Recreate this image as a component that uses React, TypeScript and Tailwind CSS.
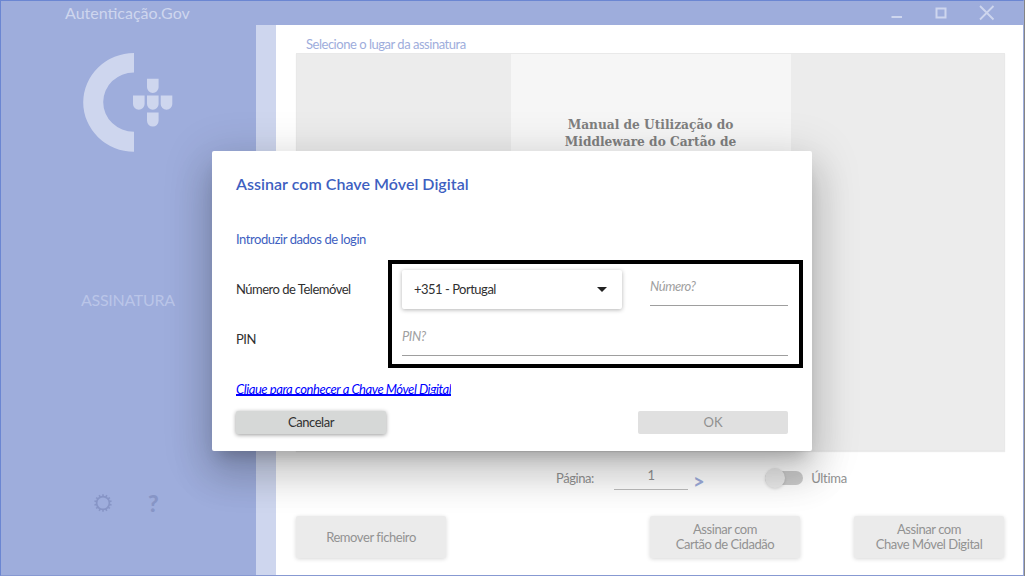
import React from "react";

const shadowButton = "shadow-[0_1px_4px_rgba(0,0,0,0.16)]";

function Logo() {
  const shield = (x: number, y: number) => (
    <path
      key={`${x}-${y}`}
      d={`M${x} ${y}h11.6v8.4a5.8 5.8 0 0 1-11.6 0z`}
    />
  );
  return (
    <svg width="90" height="100" viewBox="0 0 90 100" className="fill-[#ced6ee]">
      <path d="M51 1A51 49.500 0 0 0 0.200 50.200A51 49.500 0 0 0 51 99.700V79.800A30.800 29.700 0 0 1 20.200 50.100A30.800 29.700 0 0 1 51 20.400z" />
      {shield(64, 26.8)}
      {shield(50, 43.6)}
      {shield(64, 43.6)}
      {shield(77.7, 43.6)}
      {shield(64, 60.4)}
    </svg>
  );
}

function Gear() {
  const teeth = Array.from({ length: 14 }, (_, i) => (i * 360) / 14);
  return (
    <svg width="18" height="18" viewBox="-9 -9 18 18" className="stroke-[#8795c6]">
      <circle r="6.400" fill="none" strokeWidth="1.700" />
      {teeth.map((a) => (
        <path key={a} d="M0 -6.500V-8.800" strokeWidth="1.600" transform={`rotate(${a})`} />
      ))}
    </svg>
  );
}

function TitleBar() {
  return (
    <header className="flex h-6 shrink-0 items-center justify-between pl-16 text-[#ced6ee]">
      <span className="text-base leading-6">Autenticação.Gov</span>
      <svg width="133" height="24" viewBox="0 0 133 24" fill="none" className="stroke-[#ced6ee]">
        <path d="M1.500 16H12" strokeWidth="2" />
        <rect x="46.500" y="7.500" width="9" height="9" strokeWidth="2" />
        <path d="M90 5L103.500 18.500M103.500 5L90 18.500" strokeWidth="1.800" />
      </svg>
    </header>
  );
}

function Sidebar() {
  return (
    <aside className="flex w-[255px] shrink-0 flex-col pl-[82px] pt-[27px]">
      <Logo />
      <span className="-ml-0.5 mt-[136px] text-base leading-6 tracking-[-0.3px] text-[#bac5e8]">ASSINATURA</span>
      <div className="mt-[179px] flex items-center gap-[36px] pl-[11px] text-[#8795c6]">
        <Gear />
        <span className="text-[23px] leading-6 font-black">?</span>
      </div>
    </aside>
  );
}

function ActionButton({ children, className }: { children: React.ReactNode; className: string }) {
  return (
    <button
      className={`flex h-[42px] w-[150px] items-center justify-center rounded-[2px] bg-[#ebebeb] text-[13px] leading-[15px] tracking-[-0.43px] text-[#929292] ${shadowButton} ${className}`}
    >
      {children}
    </button>
  );
}

function MainPanel() {
  return (
    <main className="flex grow flex-col bg-white pl-5 text-[13px] tracking-[-0.43px] text-[#929292]">
      <h2 className="h-7 pl-2.5 pt-[11px] text-[13px] leading-4 tracking-[-0.48px] text-[#9eaddc]">
        Selecione o lugar da assinatura
      </h2>
      <section className="flex h-[398px] w-[709px] shrink-0 justify-center border border-[#e9e9e9] bg-[#ececec] shadow-[0_1px_1px_rgba(0,0,0,0.08)]">
        <div className="w-[280px] bg-[#f6f6f6] pt-[63px] text-center font-['DejaVu_Serif',serif] text-[12.200px] leading-[17px] font-bold tracking-normal text-[#7f7f7f]">
          Manual de Utilização do
          <br />
          Middleware do Cartão de
        </div>
      </section>
      <div className="flex h-[65px] shrink-0 pl-[260px] pt-[14px]">
        <span className="mt-[5px] w-[58px] leading-4">Página:</span>
        <div className="h-[25px] w-[74px] border-b border-[#bdbdbd] pt-0.5 text-center leading-4">1</div>
        <span className="ml-[5px] mt-[8px] text-xl leading-[17px] font-bold text-[#9eaddc]">&gt;</span>
        <div className="ml-[61px] mt-1.5 flex h-[14px] w-[38px] items-center rounded-full bg-[#cdcdcd]">
          <span className="size-5 shrink-0 rounded-full bg-[#ebebeb] shadow-[0_1px_3px_rgba(0,0,0,0.15)]" />
        </div>
        <span className="ml-2 mt-[5px] leading-4 tracking-[-0.3px]">Última</span>
      </div>
      <div className="flex">
        <ActionButton className="">Remover ficheiro</ActionButton>
        <ActionButton className="ml-[204px]">
          Assinar com
          <br />
          Cartão de Cidadão
        </ActionButton>
        <ActionButton className="ml-[54px]">
          Assinar com
          <br />
          Chave Móvel Digital
        </ActionButton>
      </div>
    </main>
  );
}

function LoginDialog() {
  return (
    <div
      role="dialog"
      className="absolute left-[212px] top-[151px] flex h-[300px] w-[600px] flex-col rounded-[2px] bg-white pl-6 text-[13px] tracking-[-0.44px] text-[#303030] shadow-[0_11px_15px_-7px_rgba(0,0,0,0.2),0_24px_38px_3px_rgba(0,0,0,0.14),0_9px_46px_8px_rgba(0,0,0,0.12)]"
    >
      <h1 className="mt-[23px] text-base leading-5 font-semibold tracking-[0.03px] text-[#3e5fc1]">
        Assinar com Chave Móvel Digital
      </h1>
      <p className="mt-[37px] leading-4 text-[#3e5fc1]">Introduzir dados de login</p>
      <div className="mt-[13px] flex h-[108px]">
        <div className="flex w-[152px] flex-col pt-[21px] leading-4">
          <span className="tracking-[-0.5px]">Número de Telemóvel</span>
          <span className="mt-[34px]">PIN</span>
        </div>
        <div className="h-[108px] w-[415px] border-4 border-black pl-[10px] pr-[11px]">
          <div className="flex items-start justify-between pt-1.5">
            <div className="flex h-[39px] w-[220px] items-center justify-between rounded-[2px] bg-white pl-3 pr-[15px] shadow-[0_1px_4px_rgba(0,0,0,0.3)]">
              <span className="tracking-[-0.5px]">+351 - Portugal</span>
              <svg width="10" height="5" viewBox="0 0 10 5" className="fill-[#222222]">
                <path d="M0 0H10L5 5z" />
              </svg>
            </div>
            <div className="h-9 w-[138px] border-b border-[#9e9e9e] pt-2 leading-4 text-[#a0a0a0] italic">Número?</div>
          </div>
          <div className="mt-[17px] h-[30px] border-b border-[#9e9e9e] pt-0.5 leading-4 text-[#a0a0a0] italic">PIN?</div>
        </div>
      </div>
      <div className="mt-[13px] flex">
        <a className="h-[15px] overflow-hidden border-b-2 border-[#0000ff] leading-4 text-[#0000ff] italic">
          Clique para conhecer a Chave Móvel Digital
        </a>
      </div>
      <div className="mt-[15px] flex w-[552px] justify-between">
        <button className="h-[23px] w-[150px] rounded-[2px] bg-[#d6d8d7] leading-[23px] shadow-[0_1px_4px_rgba(0,0,0,0.4)]">
          Cancelar
        </button>
        <button className="h-[23px] w-[150px] rounded-[2px] bg-[#e0e0e0] leading-[23px] tracking-normal text-[#909090]">OK</button>
      </div>
    </div>
  );
}

export default function App() {
  return (
    <div className="flex h-[576px] w-[1025px] overflow-hidden bg-[#858585] font-['Lato',sans-serif]">
      <div className="relative flex h-[576px] w-[1024px] flex-col overflow-hidden border border-t-[#6b86d2] border-r-[#9eaddc] border-b-[#8799d2] border-l-[#6b86d2] bg-[#9eaddc]">
        <TitleBar />
        <div className="flex grow">
          <Sidebar />
          <div className="w-5 shrink-0 bg-[#ced6ee]" />
          <MainPanel />
        </div>
        <div className="absolute -left-px -top-px">
          <LoginDialog />
        </div>
      </div>
    </div>
  );
}
